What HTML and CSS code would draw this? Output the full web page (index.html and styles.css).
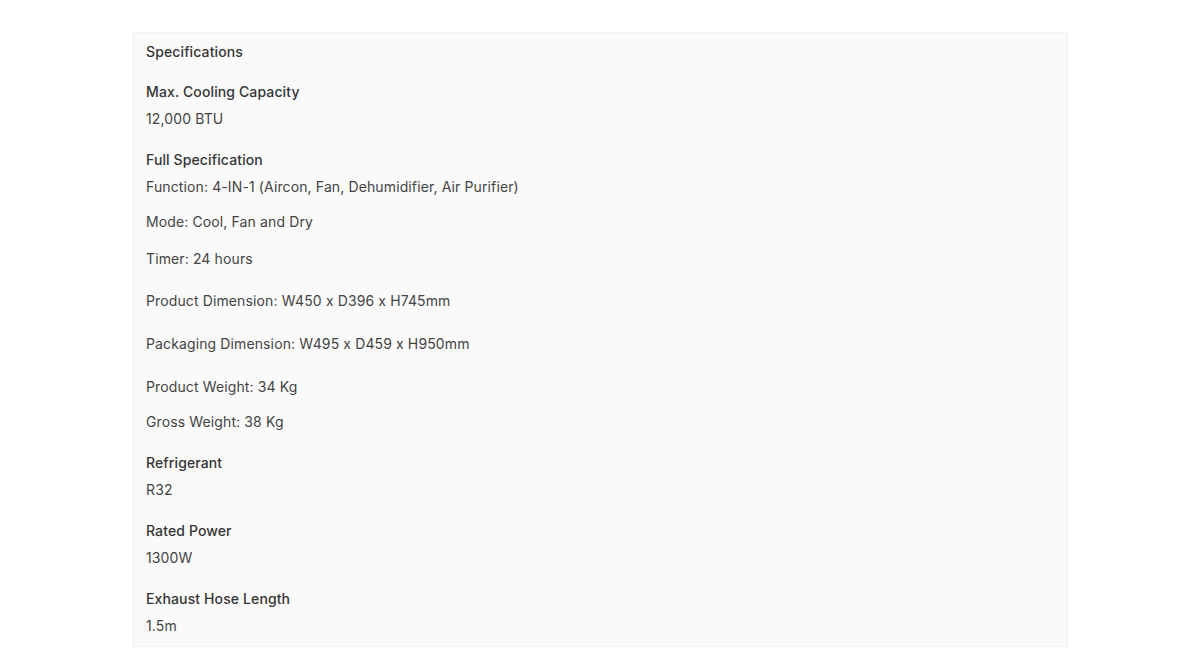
FILE: index.html
```html
<!DOCTYPE html>
<html lang="en">
<head>
<meta charset="utf-8">
<title>Specifications</title>
<link rel="stylesheet" href="styles.css">
</head>
<body>
<main class="page">
  <section class="specs">
    <h2 class="specs-title">Specifications</h2>
    <div class="spec-group">
      <h3 class="spec-label">Max. Cooling Capacity</h3>
      <p class="spec-value">12,000 BTU</p>
    </div>
    <div class="spec-group">
      <h3 class="spec-label">Full Specification</h3>
      <p class="spec-value">Function: 4-IN-1 (Aircon, Fan, Dehumidifier, Air Purifier)</p>
      <p class="spec-value gap-s">Mode: Cool, Fan and Dry</p>
      <p class="spec-value gap-m">Timer: 24 hours</p>
      <p class="spec-value gap-l">Product Dimension: W450 x D396 x H745mm</p>
      <p class="spec-value gap-xl">Packaging Dimension: W495 x D459 x H950mm</p>
      <p class="spec-value gap-xl">Product Weight: 34 Kg</p>
      <p class="spec-value gap-s">Gross Weight: 38 Kg</p>
    </div>
    <div class="spec-group">
      <h3 class="spec-label">Refrigerant</h3>
      <p class="spec-value">R32</p>
    </div>
    <div class="spec-group">
      <h3 class="spec-label">Rated Power</h3>
      <p class="spec-value">1300W</p>
    </div>
    <div class="spec-group">
      <h3 class="spec-label">Exhaust Hose Length</h3>
      <p class="spec-value">1.5m</p>
    </div>
  </section>
</main>
</body>
</html>
```

FILE: styles.css
```css
* { box-sizing: border-box; }

html, body {
  margin: 0;
  padding: 0;
  background: #ffffff;
}

body {
  font-family: Inter, "Noto Sans", "Liberation Sans", sans-serif;
  font-size: 14px;
  line-height: 20px;
  letter-spacing: 0.12px;
  color: #404040;
}

.page {
  display: flex;
  justify-content: center;
  padding-top: 32px;
}

.specs {
  width: 935px;
  background: #fafafa;
  border: 1px solid #f3f3f3;
  padding: 9px 12px 10px;
  display: flex;
  flex-direction: column;
}

.specs-title {
  margin: 0;
  font-size: 14px;
  font-weight: 500;
  line-height: 20px;
  color: #353535;
}

.spec-group {
  display: flex;
  flex-direction: column;
  margin-top: 21px;
}

.spec-group:first-of-type {
  margin-top: 20px;
}

.spec-label {
  margin: 0;
  font-size: 14px;
  font-weight: 500;
  line-height: 20px;
  color: #353535;
}

.spec-value {
  margin: 7px 0 0;
  font-size: 14px;
  font-weight: 400;
  line-height: 20px;
  color: #444444;
}

.spec-value.gap-s { margin-top: 15px; }
.spec-value.gap-m { margin-top: 17px; }
.spec-value.gap-l { margin-top: 22px; }
.spec-value.gap-xl { margin-top: 23px; }
```
